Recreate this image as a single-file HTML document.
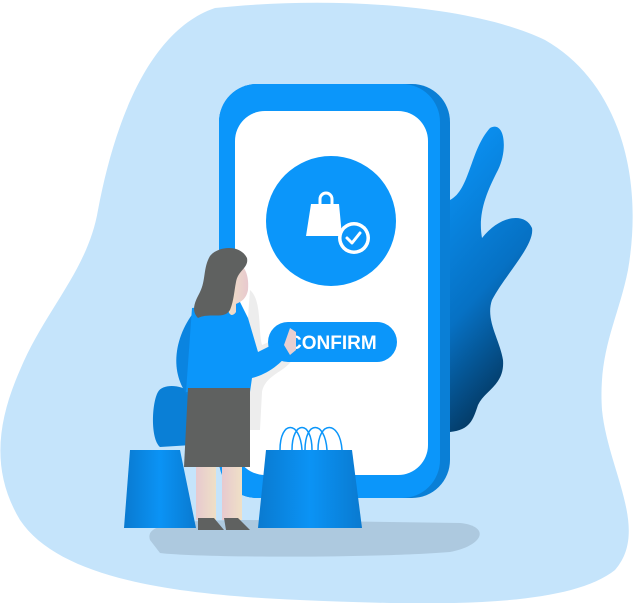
<!DOCTYPE html>
<html><head><meta charset="utf-8"><style>
html,body{margin:0;padding:0;background:#fff;width:640px;height:603px;overflow:hidden}
svg{display:block}
</style></head><body>
<svg width="640" height="603" viewBox="0 0 640 603" xmlns="http://www.w3.org/2000/svg">
<defs>
<linearGradient id="leaf" x1="0" y1="0" x2="0.3" y2="1"><stop offset="0" stop-color="#0b96fa"/><stop offset="0.6" stop-color="#0671c4"/><stop offset="1" stop-color="#04365e"/></linearGradient>
<linearGradient id="bag" x1="0" y1="0" x2="1" y2="0"><stop offset="0" stop-color="#0a7ad0"/><stop offset="0.5" stop-color="#0b93f5"/><stop offset="1" stop-color="#0a7ad0"/></linearGradient>
<linearGradient id="leg" x1="0" y1="0" x2="1" y2="0"><stop offset="0" stop-color="#e7c9cf"/><stop offset="1" stop-color="#efe0c6"/></linearGradient>
<linearGradient id="face" x1="0" y1="0" x2="1" y2="0"><stop offset="0" stop-color="#efe0c6"/><stop offset="1" stop-color="#e8c9cf"/></linearGradient>
</defs>
<path d="M215 8 C330 -4 470 4 545 40 C615 80 645 170 628 270 C618 320 598 350 602 410 C608 470 650 530 615 570 C565 610 420 605 300 600 C180 595 60 580 20 520 C-10 470 -2 420 20 370 C45 310 88 270 98 210 C115 120 150 30 215 8 Z" fill="#c5e4fb"/>
<path d="M150 540 C145 525 170 520 250 520 L460 523 C490 526 485 545 450 552 C380 558 200 558 160 553 Z" fill="#adc9df"/>
<path d="M450 200 C470 190 470 150 490 128 C505 120 508 150 498 170 C485 195 478 215 482 238 C500 215 525 212 532 228 C535 245 505 275 492 300 C485 320 500 340 503 360 C505 385 485 390 478 405 C473 420 470 430 450 432 Z" fill="url(#leaf)"/>
<rect x="219" y="84" width="231" height="414" rx="38" fill="#0a7fd6"/>
<rect x="219" y="84" width="221" height="414" rx="38" fill="#0b96fa"/>
<rect x="235" y="111" width="193" height="364" rx="30" fill="#fff"/>
<circle cx="331" cy="221" r="65" fill="#0b96fa"/>
<path d="M311 204 L339 204 L342 236 L306 236 Z" fill="#fff"/>
<path d="M320 206 V199 A6 6 0 0 1 332 199 V206" fill="none" stroke="#fff" stroke-width="3"/>
<circle cx="354" cy="238" r="16" fill="#fff"/>
<circle cx="354" cy="238" r="12.5" fill="#0b96fa"/>
<path d="M347 238 L352 243 L360 233" fill="none" stroke="#fff" stroke-width="3" stroke-linecap="round" stroke-linejoin="round"/>
<path d="M250 290 C262 300 258 330 262 345 L285 335 C295 330 300 340 292 360 C285 372 265 375 262 392 L260 430 L240 430 Z" fill="#ededed"/>
<rect x="268" y="322" width="129" height="40" rx="20" fill="#0b96fa"/>
<text x="288" y="349" font-family="Liberation Sans, sans-serif" font-size="19" font-weight="bold" fill="#fff">CONFIRM</text>
<path d="M158 392 C162 384 180 384 190 392 L192 445 L160 447 C150 438 152 402 158 392Z" fill="#0a7fd6"/>
<path d="M194 312 C176 335 168 370 188 396 L196 396 Z" fill="#0a84e0"/>
<path d="M192 308 L240 302 L248 318 L258 352 L282 340 L292 348 C282 365 265 375 252 378 L250 392 L186 392 Z" fill="#0b96fa"/>
<path d="M188 388 L250 388 L250 467 L184 467 Z" fill="#5f6160"/>
<rect x="196" y="467" width="20" height="53" fill="url(#leg)"/>
<rect x="222" y="467" width="20" height="53" fill="url(#leg)"/>
<path d="M198 518 H214 L224 530 H198 Z M224 518 H238 L250 530 H226 Z" fill="#5f6160"/>
<path d="M228 262 C240 258 250 270 248 290 C246 300 240 302 236 304 L236 312 C232 318 228 314 228 308 Z" fill="url(#face)"/>
<path d="M210 256 C218 246 240 244 247 258 C249 268 238 270 236 282 C234 292 234 300 230 310 C224 320 210 312 198 318 C190 310 196 300 200 292 C206 280 203 268 210 256Z" fill="#5f6160"/>
<path d="M124 528 L130 450 L180 450 L196 528Z" fill="url(#bag)"/>
<path d="M258 528 L266 450 L352 450 L362 528Z" fill="url(#bag)"/>
<path d="M280 450 C280 420 300 420 302 450 M292 450 C292 420 312 420 312 450 M305 450 C305 420 325 420 327 450 M318 450 C318 420 340 420 342 450" fill="none" stroke="#0b96fa" stroke-width="1.5"/>
<path d="M284 345 L290 328 L296 332 L296 350 L290 355Z" fill="#e8cfd0"/>
</svg>
</body></html>
